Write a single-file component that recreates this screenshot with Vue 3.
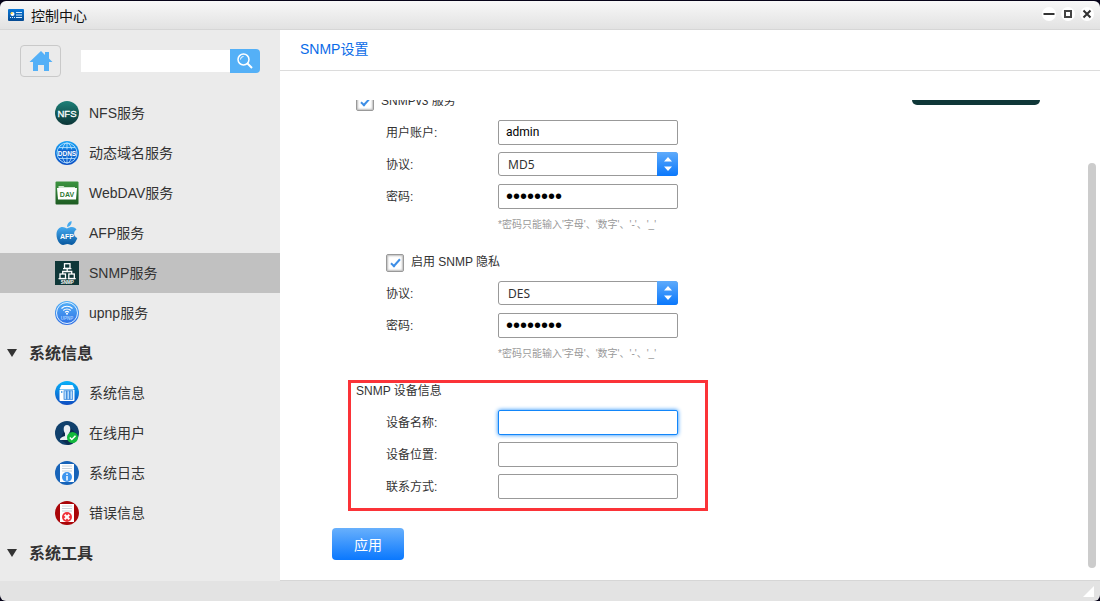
<template>
  <div class="window">
    <header class="titlebar">
      <svg class="app-icon" width="16" height="12" viewBox="0 0 16 12">
        <defs>
          <linearGradient id="gApp" x1="0" y1="0" x2="0" y2="1">
            <stop offset="0" stop-color="#0a78d8" />
            <stop offset="1" stop-color="#054a92" />
          </linearGradient>
        </defs>
        <rect width="16" height="12" rx="1" fill="url(#gApp)" />
        <circle cx="4.5" cy="5" r="2" fill="#fff" />
        <path d="M4.5 5V3a2 2 0 0 0-2 2z" fill="#ffd02c" />
        <path d="M2 8.5h1M4 8.5h1M6 8.5h1M8 3.5h6M8 6h6M8 8.5h6" stroke="#d6ecff" stroke-width="1" />
      </svg>
      <span class="title">控制中心</span>
      <div class="win-buttons">
        <button type="button" aria-label="最小化">
          <svg width="14" height="14" viewBox="0 0 14 14"><path d="M1.5 7h11" stroke="#333" stroke-width="2" /></svg>
        </button>
        <button type="button" aria-label="最大化">
          <svg width="14" height="14" viewBox="0 0 14 14"><rect x="4" y="4" width="6" height="6" fill="none" stroke="#444" stroke-width="2" /></svg>
        </button>
        <button type="button" aria-label="关闭">
          <svg width="14" height="14" viewBox="0 0 14 14"><path d="M3.5 3.5l7 7M10.5 3.5l-7 7" stroke="#333" stroke-width="2" /></svg>
        </button>
      </div>
    </header>

    <div class="body">
      <aside class="sidebar">
        <div class="tools">
          <button type="button" class="home" aria-label="主页">
            <svg width="24" height="22" viewBox="0 0 24 22">
              <path d="M12 1L16 5V2h4v6.500L23.500 12H20v9h-5v-6H9v6H4v-9H.5z" fill="#54b0f7" />
            </svg>
          </button>
          <form class="search" @submit.prevent>
            <input v-model="keyword" type="text" aria-label="搜索" />
            <button type="submit" aria-label="搜索">
              <svg width="16" height="16" viewBox="0 0 16 16" fill="none" stroke="#fff">
                <circle cx="6.500" cy="6.500" r="5.500" stroke-width="1.500" />
                <path d="M10.500 10.500l4.500 4.500" stroke-width="2" />
                <path d="M3.500 6.500a3 3 0 0 1 3-3" />
              </svg>
            </button>
          </form>
        </div>

        <nav class="menu">
          <template v-for="item in menu" :key="item.id">
            <div v-if="item.group" class="group">
              <svg width="10" height="8" viewBox="0 0 10 8"><path d="M0 0h10L5 8z" fill="#333" /></svg>
              <span>{{ item.label }}</span>
            </div>
            <a v-else href="#" class="item" :class="{ selected: item.id === current }" @click.prevent="current = item.id">
              <svg width="24" height="24" viewBox="0 0 24 24">
                <g v-if="item.id === 'nfs'">
                  <linearGradient id="gNfs" x1="0" y1="0" x2="0" y2="1">
                    <stop offset="0" stop-color="#1d8078" />
                    <stop offset="1" stop-color="#0b3436" />
                  </linearGradient>
                  <circle cx="12" cy="12" r="12" fill="url(#gNfs)" />
                  <text x="12" y="15.500" class="glyph" font-size="9.500" stroke="#fff" stroke-width=".3">NFS</text>
                </g>
                <g v-else-if="item.id === 'ddns'">
                  <linearGradient id="gDdns" x1="0" y1="0" x2="0" y2="1">
                    <stop offset="0" stop-color="#1ba4f5" />
                    <stop offset="1" stop-color="#0a4fc4" />
                  </linearGradient>
                  <circle cx="12" cy="12" r="12" fill="url(#gDdns)" />
                  <g fill="none" stroke="#bfe4ff" stroke-width=".8">
                    <circle cx="12" cy="12" r="10" />
                    <ellipse cx="12" cy="12" rx="5" ry="10" />
                    <path d="M12 2v20M4 6.500h16M4 17.500h16" />
                  </g>
                  <rect x="3" y="8.500" width="18" height="7" rx="1" fill="#1264cd" />
                  <text x="12" y="14.500" class="glyph narrow" font-size="6.500" font-weight="bold">DDNS</text>
                </g>
                <g v-else-if="item.id === 'dav'">
                  <linearGradient id="gDav" x1="0" y1="0" x2="0" y2="1">
                    <stop offset="0" stop-color="#3c9440" />
                    <stop offset="1" stop-color="#1d5b22" />
                  </linearGradient>
                  <rect width="23" height="23" x=".5" y=".5" rx="1" fill="url(#gDav)" />
                  <path d="M3.500 7V5h5l1 1h10.500v2" fill="#cfe6d0" />
                  <path d="M2 7h20l-1 11.500H3z" fill="#fff" />
                  <text x="12" y="15.500" font-size="7" font-weight="bold" text-anchor="middle" fill="#2f7a34">DAV</text>
                </g>
                <g v-else-if="item.id === 'afp'">
                  <linearGradient id="gAfp" x1="0" y1="0" x2="0" y2="1">
                    <stop offset="0" stop-color="#45aaf0" />
                    <stop offset="1" stop-color="#07579e" />
                  </linearGradient>
                  <path d="M12 6C12 2.500 14 .5 16.500 0 17 3 15 5.500 12 6z" fill="#45aaf0" />
                  <path d="M12 7.500C14 6.500 15 6 17 6c2 0 3.500 1 4.500 2.500-3.500 2-3 7 .8 8.500-1 3-3.300 7-5.800 7-1.500 0-2-.9-4-.9s-2.800.9-4.300.9C4.500 24 1.500 18.500 1.500 13.500 1.500 8.500 4.500 6 7.500 6c1.800 0 2.800.8 4.500 1.500z" fill="url(#gAfp)" />
                  <text x="12" y="17.500" class="glyph narrow" font-size="7" font-weight="bold">AFP</text>
                </g>
                <g v-else-if="item.id === 'snmp'">
                  <rect width="24" height="24" fill="#0f3738" />
                  <g fill="none" stroke="#fff" stroke-width="1.300">
                    <rect x="9.500" y="2.700" width="5.500" height="4.600" />
                    <rect x="5" y="13" width="5.500" height="4.500" />
                    <rect x="13.800" y="13" width="5.500" height="4.500" />
                    <path d="M12.200 7.500v3M7.700 13v-2.500h9V13M8 7.700h8.400M3.500 17.700h8M12.700 17.700h8" />
                  </g>
                  <text x="12.200" y="22.500" class="glyph" font-size="4.500" font-weight="bold">SNMP</text>
                </g>
                <g v-else-if="item.id === 'upnp'">
                  <linearGradient id="gUpnp" x1="0" y1="0" x2="0" y2="1">
                    <stop offset="0" stop-color="#52b1f7" />
                    <stop offset="1" stop-color="#2f6fe4" />
                  </linearGradient>
                  <circle cx="12" cy="12" r="12" fill="url(#gUpnp)" />
                  <circle cx="12" cy="12" r="10.500" fill="none" stroke="#e2f1ff" />
                  <g fill="none" stroke="#fff" stroke-width="1.100">
                    <path d="M6.500 7.500a8 8 0 0 1 11 0M8.300 9.500a5.300 5.300 0 0 1 7.400 0M10 11.300a3 3 0 0 1 4 0" />
                  </g>
                  <circle cx="12" cy="12.700" r="1" fill="#fff" />
                  <text x="12" y="18.500" text-anchor="middle" font-size="4.500" font-weight="bold" fill="#a5ccff">UPNP</text>
                </g>
                <g v-else-if="item.id === 'info'">
                  <linearGradient id="gInfo" x1="0" y1="0" x2="0" y2="1">
                    <stop offset="0" stop-color="#08b2fa" />
                    <stop offset="1" stop-color="#0f4cc0" />
                  </linearGradient>
                  <circle cx="12" cy="12" r="12" fill="url(#gInfo)" />
                  <path d="M6.500 4h11L19.500 8h-15z" fill="#fff" />
                  <rect x="4.500" y="8.500" width="15" height="11.500" rx="1" fill="#fff" />
                  <path d="M6.800 10v2" stroke="#1684e0" />
                  <g fill="#b9dcfb" stroke="#1b77d8" stroke-width=".7">
                    <rect x="9" y="9.800" width="2.700" height="8.500" />
                    <rect x="12" y="9.800" width="2.700" height="8.500" />
                    <rect x="15" y="9.800" width="2.700" height="8.500" />
                  </g>
                </g>
                <g v-else-if="item.id === 'users'">
                  <circle cx="12" cy="12" r="12" fill="#10406c" />
                  <path d="M12 4l11 10a12 12 0 0 1-10 10L5 18z" fill="#0a2b50" />
                  <path d="M12 4c2 0 3.300 1.600 3.300 4s-.8 3.400-1.300 4.200V15c1.500.6 4 1.300 4 4H5c0-2.700 3.500-3.400 5-4v-2.800C9.500 11.400 8.700 10.400 8.700 8S10 4 12 4z" fill="#e9eef2" />
                  <circle cx="17.500" cy="16.500" r="5.500" fill="#12b83c" />
                  <path d="M14.800 16.500l2 2 3.700-3.800" fill="none" stroke="#fff" stroke-width="1.500" />
                </g>
                <g v-else>
                  <circle cx="12" cy="12" r="12" :fill="item.id === 'log' ? '#1763b8' : '#a90508'" />
                  <path d="M5 3h14v18H5z" fill="#fff" />
                  <path d="M7 5h10M7 7.500h10M7 10h10" stroke="#c9d2da" />
                  <circle cx="12" cy="16" r="5" :fill="item.id === 'log' ? '#3e95ee' : '#f0333a'" />
                  <path v-if="item.id === 'log'" d="M12 12.500v1.500M12 15v4.500" stroke="#fff" stroke-width="1.500" />
                  <path v-else d="M9.700 13.700l4.600 4.600M14.300 13.700l-4.600 4.600" stroke="#fff" stroke-width="2" />
                </g>
              </svg>
              <span>{{ item.label }}</span>
            </a>
          </template>
        </nav>
      </aside>

      <main class="main">
        <h1>SNMP设置</h1>
        <div class="scroll-area">
          <div ref="viewport" class="viewport">
            <form class="settings" @submit.prevent>
              <div class="check-row outer">
                <input id="v3" v-model="form.v3" type="checkbox" />
                <label for="v3">SNMPv3 服务</label>
              </div>
              <template v-for="block in blocks" :key="block.id">
                <div v-if="block.privacy" class="check-row">
                  <input id="privacy" v-model="form.privacy" type="checkbox" />
                  <label for="privacy">启用 SNMP 隐私</label>
                </div>
                <div v-else class="row">
                  <label for="account">用户账户:</label>
                  <input id="account" v-model="form.account" class="text" type="text" />
                </div>
                <div class="row">
                  <label :for="block.id + '-proto'">协议:</label>
                  <div class="select">
                    <select :id="block.id + '-proto'" v-model="form[block.id].protocol">
                      <option v-for="o in block.options" :key="o">{{ o }}</option>
                    </select>
                    <svg width="21" height="24" viewBox="0 0 21 24"><path d="M7 9.500h8L11 5zM7 14.500h8L11 19z" fill="#fff" /></svg>
                  </div>
                </div>
                <div class="row">
                  <label :for="block.id + '-pwd'">密码:</label>
                  <input :id="block.id + '-pwd'" v-model="form[block.id].password" class="text" type="password" />
                </div>
                <p class="hint">*密码只能输入'字母'、'数字'、'-'、'_'</p>
              </template>

              <section class="device">
                <h2>SNMP 设备信息</h2>
                <div v-for="f in deviceFields" :key="f.id" class="row">
                  <label :for="f.id">{{ f.label }}</label>
                  <input :id="f.id" v-model="form[f.id]" class="text" :class="{ active: f.id === active }" type="text" @focus="active = f.id" />
                </div>
              </section>

              <button type="submit" class="apply">应用</button>
            </form>
            <div class="logo"></div>
          </div>
          <div class="track"><div class="thumb" :style="{ height: thumbHeight + 'px' }"></div></div>
        </div>
      </main>
    </div>

    <footer class="statusbar">
      <svg width="11" height="11" viewBox="0 0 11 11"><path d="M11 0v11H0z" fill="#fff" /></svg>
    </footer>
  </div>
</template>

<script setup>
import { ref, reactive, onMounted } from 'vue'

const menu = [
  { id: 'nfs', label: 'NFS服务' },
  { id: 'ddns', label: '动态域名服务' },
  { id: 'dav', label: 'WebDAV服务' },
  { id: 'afp', label: 'AFP服务' },
  { id: 'snmp', label: 'SNMP服务' },
  { id: 'upnp', label: 'upnp服务' },
  { id: 'g-info', label: '系统信息', group: true },
  { id: 'info', label: '系统信息' },
  { id: 'users', label: '在线用户' },
  { id: 'log', label: '系统日志' },
  { id: 'error', label: '错误信息' },
  { id: 'g-tools', label: '系统工具', group: true }
]

const blocks = [
  { id: 'auth', options: ['MD5', 'SHA'] },
  { id: 'priv', options: ['DES', 'AES'], privacy: true }
]

const deviceFields = [
  { id: 'name', label: '设备名称:' },
  { id: 'location', label: '设备位置:' },
  { id: 'contact', label: '联系方式:' }
]

const keyword = ref('')
const current = ref('snmp')
const active = ref('name')
const viewport = ref(null)
const thumbHeight = ref(0)

const form = reactive({
  v3: true,
  privacy: true,
  account: 'admin',
  auth: { protocol: 'MD5', password: '12345678' },
  priv: { protocol: 'DES', password: '12345678' },
  name: '',
  location: '',
  contact: ''
})

// 打开时滚动到底部
onMounted(() => {
  const el = viewport.value
  el.scrollTop = el.scrollHeight
  thumbHeight.value = Math.round(el.clientHeight * el.clientHeight / el.scrollHeight)
})
</script>

<style>
body {
  margin: 0;
  background: #060318;
}
</style>

<style scoped>
.window {
  box-sizing: border-box;
  height: 100vh;
  border-top: 1px solid #060318;
  display: flex;
  flex-direction: column;
  font-family: "Liberation Sans", "Noto Sans CJK SC", sans-serif;
  font-size: 12px;
  color: #333;
}
button, input, select {
  font-family: inherit;
  margin: 0;
  padding: 0;
  box-sizing: border-box;
}
button {
  border: none;
  cursor: pointer;
}
.titlebar {
  flex: none;
  box-sizing: border-box;
  height: 29px;
  display: flex;
  align-items: center;
  padding: 0 6px 0 8px;
  background: linear-gradient(#f8f8f8, #e2e2e2);
  border-bottom: 1px solid #d6d6d6;
  border-radius: 6px 6px 0 0;
}
.title {
  margin-left: 7px;
  font-size: 14px;
  color: #111;
}
.win-buttons {
  margin-left: auto;
  padding-bottom: 2px;
  display: flex;
  gap: 5px;
}
.win-buttons button {
  width: 14px;
  height: 14px;
  border-radius: 50%;
  background: #fff;
}
.win-buttons svg {
  display: block;
}
.body {
  flex: 1;
  min-height: 0;
  display: flex;
}
.sidebar {
  flex: none;
  width: 280px;
  overflow: hidden;
  background: #ebebeb;
}
.tools {
  height: 48px;
  padding: 15px 20px 0;
  display: flex;
  gap: 20px;
}
.home {
  flex: none;
  width: 41px;
  height: 32px;
  display: flex;
  align-items: center;
  justify-content: center;
  border: 1px solid #c9c9c9;
  border-radius: 4px;
  background: #ebebeb;
}
.home svg {
  flex: none;
}
.search {
  flex: 1;
  min-width: 0;
  height: 32px;
  display: flex;
  align-items: center;
}
.search input {
  flex: 1;
  min-width: 0;
  height: 22px;
  border: none;
  background: #fff;
}
.search button {
  flex: none;
  width: 30px;
  height: 24px;
  display: flex;
  align-items: center;
  justify-content: center;
  background: #54b0f7;
  border-radius: 0 4px 4px 0;
}
.item, .group {
  height: 40px;
  display: flex;
  align-items: center;
}
.item span, .group span {
  padding-bottom: 2px;
}
.item {
  gap: 10px;
  padding-left: 55px;
  font-size: 14px;
  color: #333;
  text-decoration: none;
}
.item.selected {
  background: #c1c1c1;
}
.group {
  gap: 12px;
  padding-left: 7px;
  font-size: 16px;
  font-weight: bold;
}
.glyph {
  fill: #fff;
  text-anchor: middle;
}
.narrow {
  font-family: "Liberation Sans Narrow", "Liberation Sans", sans-serif;
}
.main {
  flex: 1;
  min-width: 0;
  display: flex;
  flex-direction: column;
  background: #fff;
  border-bottom: 1px solid #d6d6d6;
}
h1 {
  flex: none;
  margin: 0;
  height: 40px;
  line-height: 38px;
  padding-left: 20px;
  font-size: 14px;
  font-weight: normal;
  color: #0a6be8;
  border-bottom: 1px solid #dcdcdc;
}
.scroll-area {
  flex: 1;
  min-height: 0;
  display: flex;
  margin: 29px 4px 12px 52px;
}
.viewport {
  flex: 1;
  overflow: hidden;
  display: flex;
  justify-content: space-between;
  align-items: flex-start;
}
.settings {
  padding: 57px 0 8px;
}
.check-row {
  height: 32px;
  display: flex;
  align-items: center;
  gap: 7px;
  padding-left: 54px;
}
.check-row.outer {
  padding-left: 24px;
}
.check-row input {
  appearance: none;
  width: 18px;
  height: 18px;
  position: relative;
  top: 2px;
  border: 1px solid #999;
  border-radius: 2px;
  background: #fff;
  box-shadow: inset 0 0 2px 1px #bbb;
}
.check-row input:checked::after {
  content: "";
  position: absolute;
  left: 6px;
  top: 2px;
  width: 3px;
  height: 8px;
  border: solid #3d8ee6;
  border-width: 0 2px 2px 0;
  transform: rotate(42deg);
}
.row {
  height: 32px;
  display: flex;
  align-items: center;
  padding-left: 54px;
}
.row label, .check-row label {
  padding-bottom: 2px;
}
.row label {
  flex: none;
  width: 112px;
}
.text {
  width: 180px;
  height: 25px;
  padding: 0 7px;
  border: 1px solid #999;
  border-radius: 2px;
  font-family: Roboto, sans-serif;
  font-size: 12px;
  color: #000;
  background: #fff;
  outline: none;
}
.text[type="password"] {
  font-family: "Liberation Sans", sans-serif;
  font-size: 20px;
}
.text.active {
  border-color: #1286fa;
  box-shadow: 0 0 4px #1286fa;
}
.select {
  display: grid;
  width: 180px;
}
.select select, .select svg {
  grid-area: 1 / 1;
}
.select select {
  appearance: none;
  height: 24px;
  padding: 0 30px 0 9px;
  border: 1px solid #999;
  border-radius: 3px;
  background: #fff;
  font-family: "Noto Sans", sans-serif;
  font-size: 12px;
  color: #333;
}
.select svg {
  justify-self: end;
  pointer-events: none;
  border-radius: 0 3px 3px 0;
  background: linear-gradient(#5fabfb, #0a78fc);
}
.hint {
  height: 33px;
  margin: 0;
  padding-left: 166px;
  line-height: 25px;
  font-size: 10px;
  color: #999;
}
.device {
  box-sizing: border-box;
  width: 360px;
  margin: 6px 0 17px 16px;
  padding: 0 0 6px 5px;
  border: 3px solid #fb3338;
}
h2 {
  margin: 0;
  height: 23px;
  line-height: 16px;
  font-size: 12px;
  font-weight: normal;
}
.device .row {
  padding-left: 30px;
}
.apply {
  display: block;
  width: 72px;
  height: 32px;
  border-radius: 4px;
  background: linear-gradient(#68b0fc, #0a78fe);
  font-size: 14px;
  color: #fff;
}
.logo {
  flex: none;
  width: 128px;
  height: 78px;
  margin-right: 48px;
  border-radius: 5px;
  background: #0f3738;
}
.track {
  flex: none;
  width: 8px;
  display: flex;
  flex-direction: column;
  justify-content: flex-end;
}
.thumb {
  border-radius: 4px;
  background: #ccc;
}
.statusbar {
  flex: none;
  height: 20px;
  display: flex;
  align-items: center;
  justify-content: flex-end;
  padding-right: 6px;
  background: #e3e3e3;
  border-radius: 0 0 6px 6px;
}
</style>
